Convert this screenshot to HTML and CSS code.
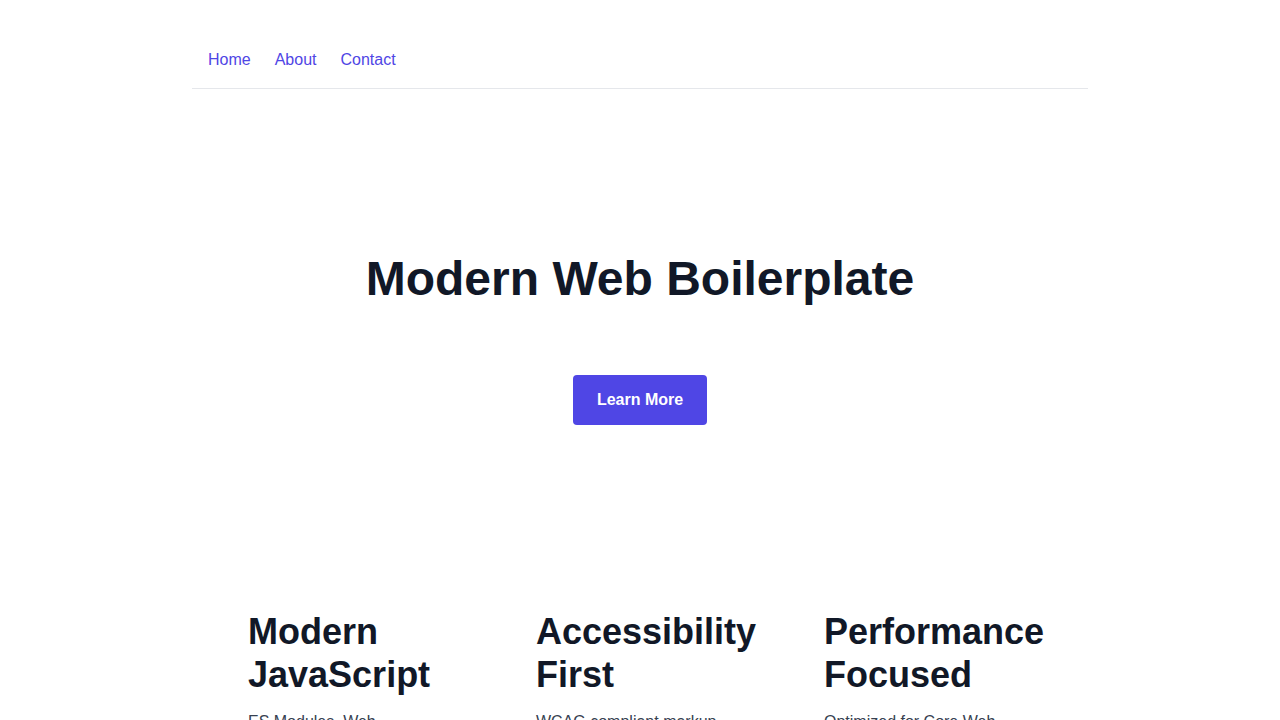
FILE: index.html
```html
<!DOCTYPE html>
<html lang="en">
<head>
<meta charset="utf-8">
<title>Modern Web Boilerplate</title>
<link rel="stylesheet" href="styles.css">
</head>
<body>
<a class="skip-link" href="#main">Skip to main content</a>
<div class="container">
  <header class="site-header">
    <nav class="nav" aria-label="Main">
      <a href="#" class="nav-link">Home</a>
      <a href="#" class="nav-link">About</a>
      <a href="#" class="nav-link">Contact</a>
    </nav>
  </header>
  <main id="main">
    <section class="hero">
      <h1 class="hero-title">Modern Web Boilerplate</h1>
      <button class="btn" type="button">Learn More</button>
    </section>
    <section class="features">
      <article class="card">
        <h2 class="card-title">Modern JavaScript</h2>
        <p class="card-text">ES Modules, Web Components, and more.</p>
      </article>
      <article class="card">
        <h2 class="card-title">Accessibility First</h2>
        <p class="card-text">WCAG compliant markup, semantic HTML and ARIA.</p>
      </article>
      <article class="card">
        <h2 class="card-title">Performance Focused</h2>
        <p class="card-text">Optimized for Core Web Vitals.</p>
      </article>
    </section>
  </main>
</div>
</body>
</html>
```
FILE: styles.css
```css
* { box-sizing: border-box; }

html, body {
  margin: 0;
  padding: 0;
  background: #ffffff;
}

body {
  font-family: "Liberation Sans", Arial, sans-serif;
  font-size: 16px;
  line-height: 1.5;
  color: #111827;
}

.skip-link {
  position: absolute;
  top: 0;
  left: -9999px;
  color: #111827;
}

.container {
  max-width: 896px;
  margin: 0 auto;
}

.site-header {
  padding-top: 32px;
  border-bottom: 1px solid #e5e7eb;
}

.nav {
  display: flex;
  gap: 24px;
  padding: 16px;
}

.nav-link {
  color: #4f46e5;
  text-decoration: none;
  line-height: 24px;
}

.hero {
  text-align: center;
  padding: 161px 0 161px;
}

.hero-title {
  margin: 0 0 67px;
  font-size: 48px;
  line-height: 1.2;
  font-weight: 700;
  color: #111827;
}

.btn {
  font-family: inherit;
  font-size: 16px;
  font-weight: 700;
  line-height: 24px;
  color: #ffffff;
  background: #4f46e5;
  border: none;
  border-radius: 4px;
  padding: 13px 24px;
  cursor: pointer;
}

.features {
  display: grid;
  grid-template-columns: repeat(3, minmax(0, 1fr));
  gap: 32px;
  padding: 0 32px;
}

.card {
  padding: 24px;
}

.card-title {
  margin: 0 0 14px;
  font-size: 36px;
  line-height: 1.2;
  font-weight: 700;
  color: #111827;
}

.card-text {
  margin: 0;
  color: #374151;
}
```
